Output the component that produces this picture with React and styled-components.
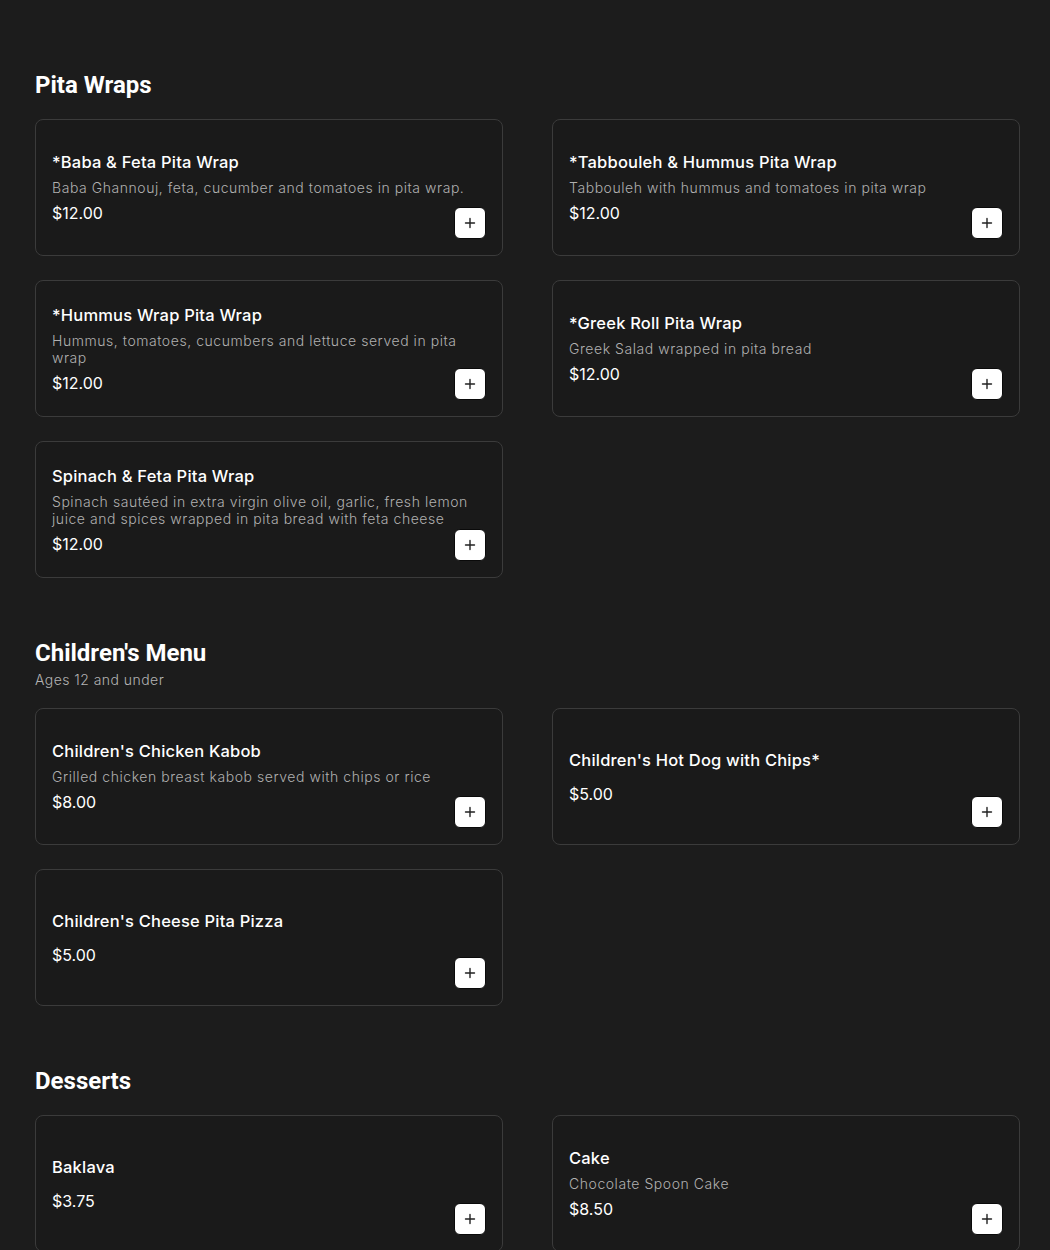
import React from "react";
import styled, { createGlobalStyle } from "styled-components";

const Global = createGlobalStyle`
  html, body { margin: 0; padding: 0; background: #1c1c1c; }
  body { font-family: "Inter", "Noto Sans", sans-serif; color: #fff; }
  * { box-sizing: border-box; }
`;

const Page = styled.main`
  padding: 10px 30px 40px 35px;
  background: #1c1c1c;
  min-height: 1250px;
`;

const Section = styled.section`
  padding-top: 59px;
`;

const Heading = styled.h2`
  margin: 0;
  font-family: "Roboto", sans-serif;
  font-weight: 700;
  font-size: 24px;
  line-height: 32px;
  color: #fff;
`;

const SubHeading = styled.p`
  margin: 1px 0 0;
  font-family: "Inter", sans-serif;
  font-weight: 300;
  font-size: 14px;
  line-height: 20px;
  letter-spacing: 0.45px;
  color: #b3b3b3;
`;

const Grid = styled.div`
  margin-top: 18px;
  display: grid;
  grid-template-columns: 468px 468px;
  column-gap: 49px;
  row-gap: 24px;
`;

const Card = styled.article`
  position: relative;
  height: 137px;
  padding: 0 16px;
  border: 1px solid #3b3b3b;
  border-radius: 8px;
  background: #1a1a1a;
  display: flex;
  flex-direction: column;
  justify-content: center;
`;

const Title = styled.h3`
  margin: 0;
  font-size: 16.5px;
  font-weight: 500;
  line-height: 22px;
  letter-spacing: 0.2px;
  color: #fff;
`;

const Desc = styled.p`
  margin: 6px 0 0;
  font-size: 14px;
  font-weight: 300;
  line-height: 17px;
  letter-spacing: 0.55px;
  color: #b0b0b0;
`;

const Price = styled.div`
  margin-top: 6px;
  font-size: 16px;
  font-weight: 400;
  line-height: 22px;
  color: #fff;
`;

const AddButton = styled.button`
  position: absolute;
  right: 16px;
  bottom: 16px;
  width: 32px;
  height: 32px;
  border-radius: 6px;
  border: 1px solid #0a0a0a;
  background: #fff;
  display: flex;
  align-items: center;
  justify-content: center;
  padding: 0;
  cursor: pointer;
`;

const PlusIcon = () => (
  <svg width="12" height="12" viewBox="0 0 12 12" fill="none">
    <path d="M6 1.5v9M1.5 6h9" stroke="#222" strokeWidth="1.4" strokeLinecap="round" />
  </svg>
);

const sections = [
  {
    title: "Pita Wraps",
    items: [
      { name: "*Baba & Feta Pita Wrap", desc: "Baba Ghannouj, feta, cucumber and tomatoes in pita wrap.", price: "$12.00" },
      { name: "*Tabbouleh & Hummus Pita Wrap", desc: "Tabbouleh with hummus and tomatoes in pita wrap", price: "$12.00" },
      { name: "*Hummus Wrap Pita Wrap", desc: "Hummus, tomatoes, cucumbers and lettuce served in pita wrap", price: "$12.00" },
      { name: "*Greek Roll Pita Wrap", desc: "Greek Salad wrapped in pita bread", price: "$12.00" },
      { name: "Spinach & Feta Pita Wrap", desc: "Spinach sautéed in extra virgin olive oil, garlic, fresh lemon juice and spices wrapped in pita bread with feta cheese", price: "$12.00" },
    ],
  },
  {
    title: "Children's Menu",
    subtitle: "Ages 12 and under",
    items: [
      { name: "Children's Chicken Kabob", desc: "Grilled chicken breast kabob served with chips or rice", price: "$8.00" },
      { name: "Children's Hot Dog with Chips*", desc: "", price: "$5.00" },
      { name: "Children's Cheese Pita Pizza", desc: "", price: "$5.00" },
    ],
  },
  {
    title: "Desserts",
    items: [
      { name: "Baklava", desc: "", price: "$3.75" },
      { name: "Cake", desc: "Chocolate Spoon Cake", price: "$8.50" },
    ],
  },
];

export default function App() {
  return (
    <>
      <Global />
      <Page>
        {sections.map((s) => (
          <Section key={s.title}>
            <Heading>{s.title}</Heading>
            {s.subtitle && <SubHeading>{s.subtitle}</SubHeading>}
            <Grid>
              {s.items.map((it) => (
                <Card key={it.name}>
                  <Title>{it.name}</Title>
                  <Desc>{it.desc}</Desc>
                  <Price>{it.price}</Price>
                  <AddButton aria-label={`Add ${it.name}`}>
                    <PlusIcon />
                  </AddButton>
                </Card>
              ))}
            </Grid>
          </Section>
        ))}
      </Page>
    </>
  );
}
